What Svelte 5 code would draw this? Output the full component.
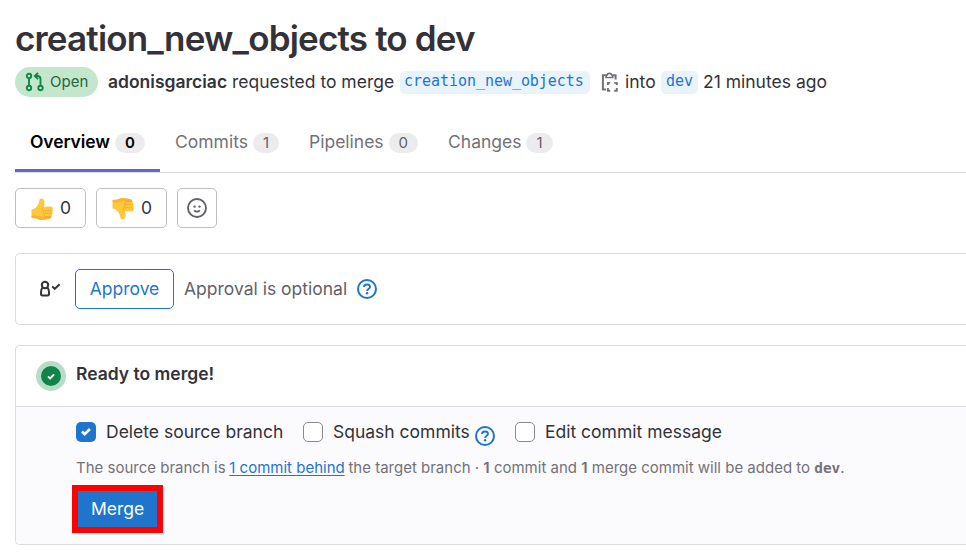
<script>
  const tabs = [
    { label: 'Overview', count: 0, width: 145 },
    { label: 'Commits', count: 1, width: 134 },
    { label: 'Pipelines', count: 0, width: 139 },
    { label: 'Changes', count: 1, width: 134 }
  ];
</script>

{#snippet help()}
  <svg class="help" width="20" height="20" viewBox="0 0 20 20" fill="none" stroke="currentColor" stroke-width="2">
    <circle cx="10" cy="10" r="9" />
    <path d="M7 8.1C7 6.3 8.2 5.5 10 5.5s3 .9 3 2.4c0 1.9-2.8 1.7-2.8 4" stroke-width="1.9" />
    <circle cx="10.1" cy="14.3" r="1.2" fill="currentColor" stroke="none" />
  </svg>
{/snippet}

{#snippet thumb(down)}
  <svg class="thumb" class:down width="22" height="22" viewBox="0 0 22 22">
    <path d="M.5 11.4 3.8 10.6C6 8.7 8.2 5.8 8.4 2.2 8.6-.3 12.8-.2 13.5 3.4c.3 2-.3 4.2-.7 5.9 2.2-.9 4.7-.8 7.4-.6 1.9.2 2.1 2.2 1.1 3 .8 1.1.5 2.3-.2 2.9.7 1.2.3 2.4-.6 3 .3 1.8-.8 2.9-2.4 3.2-4.4 1-9.7 1.6-12.5-.3L.5 20.1z" fill="#ffc83a" />
    <path d="M.7 19.9 5.2 20.2c2.8 2 8.6 1.7 12.3.9 1.7-.3 3-1.3 2.8-2.8-.8-.5-2.8.2-4.9.3-3.8.3-8-.2-11-1.2-1.3-.3-2.5 0-3.7.5z" fill="#f9b233" />
    <path d="M21 11.9c-1.8.5-4.5.5-7.1.5m6.8 2.4c-2 .5-4.5.5-6.9.5m6.5 2.9c-2 .5-4.3.5-6.4.4M12.7 9.3c-1.1.4-1.8 1.2-1.5 2.1.1 1 1.1 1.3 2 1.3-1.6.8-1.2 2.2.2 2.6-1.1.8-.7 2.5.5 2.9" fill="none" stroke="#eda02a" stroke-width=".7" />
  </svg>
{/snippet}

<main>
  <h1>creation_new_objects to dev</h1>
  <div class="meta">
    <span class="open">
      <svg width="20" height="20" viewBox="0 0 20 20" fill="none" stroke="#108548" stroke-width="1.9">
        <circle cx="4" cy="4" r="2.2" /><circle cx="4" cy="16" r="2.2" /><circle cx="15.5" cy="16" r="2.2" />
        <path d="M4 6.2v7.6M15.5 13.8V7c0-2-1-3-3-3h-2M13 .9 9.9 4 13 7.1" />
      </svg>
      <span>Open</span>
    </span>
    <b>adonisgarciac</b>
    <span class="requested">requested to merge</span>
    <code class="source">creation_new_objects</code>
    <svg class="copy" width="20" height="21" viewBox="0 0 20 21" fill="none" stroke="#737278" stroke-width="2">
      <path d="M5.7 3.3H2.9v14.2h3.2M13.2 3.3h2.4v4.2" />
      <path d="M6.1 3h1.1C7.5.8 11.4.8 11.7 3h1v2.5H6.1z" stroke-width="1.7" />
      <path d="M10.2 10.9H7.9v2.2m0 3v2.6h2.3m4-7.8h2.6v2.2m0 3v2.6h-2.6" stroke-width="1.9" />
    </svg>
    <span class="into">into</span>
    <code class="target">dev</code>
    <span class="ago">21 minutes ago</span>
  </div>

  <nav>
    {#each tabs as tab, i}
      <a class:active={i === 0} style:width="{tab.width}px"><span>{tab.label}</span><i>{tab.count}</i></a>
    {/each}
  </nav>

  <div class="reactions">
    <button>{@render thumb(false)}<span>0</span></button>
    <button>{@render thumb(true)}<span>0</span></button>
    <button class="smile" aria-label="Add reaction">
      <svg width="20" height="20" viewBox="0 0 20 20" fill="none" stroke="#626168">
        <circle cx="10" cy="10" r="9" stroke-width="1.9" />
        <path d="M7.2 12.2c1.3 2 4.3 2 5.6 0" stroke-width="1.8" />
        <g fill="#626168" stroke="none"><circle cx="7.5" cy="8.6" r="1.2" /><circle cx="12.5" cy="8.6" r="1.2" /></g>
      </svg>
    </button>
  </div>

  <section class="approval">
    <svg class="person" width="22" height="18" viewBox="0 0 22 18" fill="none" stroke="#333238" stroke-width="2">
      <circle cx="6" cy="5" r="3.2" />
      <path d="M3.5 7.7C2.3 8.7 2 10.5 2 13.8c0 1.1.5 1.7 1.5 1.7h5c1 0 1.5-.6 1.5-1.7 0-3.3-.3-5.1-1.5-6.1M13.2 6.4l2.5 2.5 4.9-4.6" />
    </svg>
    <button class="approve">Approve</button>
    <span class="optional">Approval is optional</span>
    {@render help()}
  </section>

  <section class="merge-box">
    <header>
      <svg width="30" height="30" viewBox="0 0 30 30">
        <circle cx="15" cy="15" r="15" fill="#b8dcc9" /><circle cx="15" cy="15" r="10" fill="#108548" />
        <path d="m12 15.3 2.1 2.1 4-4" fill="none" stroke="#fff" stroke-width="1.9" />
      </svg>
      <strong>Ready to merge!</strong>
    </header>
    <div class="body">
      <div class="options">
        <label class="delete"><span class="box checked"><svg width="20" height="20" viewBox="0 0 20 20"><path d="m6 9.5 2.7 2.7 5.2-5.2" fill="none" stroke="#fff" stroke-width="2.6" /></svg></span><span class="text">Delete source branch</span></label>
        <label class="squash"><span class="box"></span><span class="text">Squash commits</span></label>
        <span class="squash-help">{@render help()}</span>
        <label><span class="box"></span><span class="text">Edit commit message</span></label>
      </div>
      <p>The source branch is <a>1 commit behind</a> the target branch · <b>1</b> commit and <b>1</b> merge commit will be added to <code>dev</code>.</p>
      <div class="highlight"><button class="merge">Merge</button></div>
    </div>
  </section>
</main>

<style>
  :global(body) { background: #fff; overflow: hidden; }
  main { box-sizing: border-box; width: 966px; height: 560px; padding: 16px 0 0 15px; overflow: hidden; font: 17.5px/25px Inter, "Noto Sans", sans-serif; color: #333238; }
  button { font: inherit; color: inherit; box-sizing: border-box; margin: 0; }
  svg { flex: none; }
  h1 { margin: 0; font-size: 35px; line-height: 44px; font-weight: 600; letter-spacing: -.82px; white-space: nowrap; }
  .meta { display: flex; align-items: center; height: 30px; margin-top: 7px; white-space: nowrap; }
  b { font-weight: 600; }
  .open { display: flex; align-items: center; box-sizing: border-box; width: 83px; height: 30px; padding-left: 10px; gap: 5px; background: #c3e6cd; border-radius: 15px; color: #24663b; font-size: 15px; margin-right: 10px; }
  .open span { padding-bottom: 2px; }
  .meta b, .requested, .into, .ago { padding-bottom: 2px; }
  .meta b { width: 124px; }
  .requested { width: 168px; }
  .meta code { box-sizing: border-box; height: 23px; padding: 0 5px; border-radius: 5px; background: #e9f3fc; color: #1f75cb; font: 15px/21px "DejaVu Sans Mono", monospace; letter-spacing: -.04px; }
  .meta .source { width: 190px; padding-left: 4px; }
  .copy { margin-left: 10px; }
  .into { margin-left: 5px; width: 36px; }
  .target { width: 37px; }
  .ago { margin-left: 5px; }
  nav { display: flex; box-sizing: border-box; height: 61px; margin-top: 15px; border-bottom: 1px solid #dcdcde; }
  nav a { position: relative; display: flex; box-sizing: border-box; height: 60px; padding: 17px 0 0 15px; gap: 5px; color: #737278; white-space: nowrap; }
  nav a.active { color: #000; font-weight: 600; letter-spacing: -.09px; }
  nav a.active::after { content: ''; position: absolute; left: 0; right: 0; bottom: 0; height: 3px; background: #6666c4; }
  nav i { box-sizing: border-box; height: 20px; margin-top: 4px; padding: 0 10px; border-radius: 10px; background: #ececef; color: #626168; font: 15px/20px Inter, sans-serif; }
  nav .active i { color: #000; font-weight: 600; }
  .reactions { display: flex; gap: 10px; margin-top: 15px; }
  .reactions button { display: flex; align-items: center; width: 71px; height: 40px; padding: 0 0 0 15px; gap: 7px; border: 1px solid #bfbfc3; border-radius: 5px; background: #fff; }
  .reactions .smile { width: 40px; padding: 0 9px; }
  .reactions button span { padding-bottom: 2px; }
  .thumb { position: relative; top: 1px; }
  .thumb.down { transform: scaleY(-1); }
  section { box-sizing: border-box; border: 1px solid #dcdcde; border-right: 0; border-radius: 5px 0 0 5px; }
  .approval { display: flex; align-items: center; height: 72px; margin-top: 25px; padding-left: 23px; }
  .approve { width: 99px; height: 40px; margin-left: 14px; padding: 0 0 2px; border: 1px solid #1f75cb; border-radius: 5px; background: #fff; color: #1f75cb; }
  .optional { margin-left: 10px; width: 173px; padding-bottom: 2px; color: #626168; white-space: nowrap; }
  .help { display: block; color: #1f75cb; }
  .merge-box { height: 200px; margin-top: 20px; overflow: hidden; }
  header { display: flex; box-sizing: border-box; height: 61px; padding: 15px 0 0 20px; gap: 10px; border-bottom: 1px solid #dcdcde; }
  header strong { font-weight: 600; }
  .body { box-sizing: border-box; height: 138px; padding: 12px 0 0 60px; background: #fbfafd; }
  .options { display: flex; height: 26px; align-items: center; white-space: nowrap; }
  label { display: flex; align-items: center; gap: 10px; height: 26px; }
  .text { padding-bottom: 2px; }
  .delete { width: 227px; }
  .squash { width: 172px; }
  .squash-help { width: 40px; padding-top: 8px; }
  .box { box-sizing: border-box; width: 20px; height: 20px; border: 1px solid #89888d; border-radius: 5px; background: #fff; }
  .box.checked { border: 0; background: #1f75cb; }
  .box svg { display: block; }
  p { margin: 10px 0 5px; font-size: 15px; line-height: 25px; color: #737278; white-space: nowrap; }
  p a { color: #1f75cb; text-decoration: underline; text-underline-offset: 2px; margin: 0 -.5px; }
  p code { font: bold 14.4px/20px "DejaVu Sans Mono", monospace; }
  .highlight { box-sizing: border-box; width: 91px; height: 48px; margin-left: -4px; border: 6px solid #f00; }
  .merge { display: block; width: 79px; height: 36px; padding: 0 0 2px; border: 0; background: #1f75cb; color: #fff; }
</style>
